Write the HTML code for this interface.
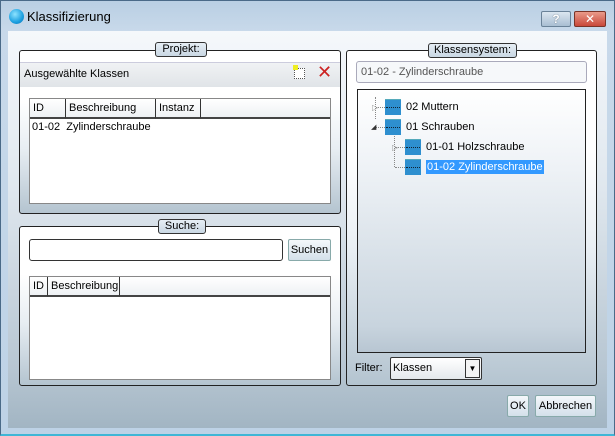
<!DOCTYPE html>
<html><head><meta charset="utf-8"><style>
*{box-sizing:border-box;margin:0;padding:0}
body{width:615px;height:436px;overflow:hidden;font-family:"Liberation Sans","DejaVu Sans",sans-serif;font-size:11px;color:#000;background:#c5d7e8;position:relative}
.abs{position:absolute}
.frame{left:0;top:0;width:615px;height:436px;background:linear-gradient(#b9cfe3,#c8d9ea 30px,#bdd2e6);border:1px solid #4a6a88;border-bottom:2px solid #3fb6d6}
.client{left:8px;top:31px;width:599px;height:397px;background:linear-gradient(#f5f8fb,#dfe7ee 40%,#b7c6d2 85%,#a2b5c3);}
.panel{border:1px solid #222;border-radius:3px;background:linear-gradient(#fff 30%,#e8eef3 60%,#b4c4d0)}
.lbl{border:1px solid #333;border-radius:3px;background:linear-gradient(#e6eef5,#c9d7e3);text-align:center;font-size:11px;line-height:13px;height:15px}
.tbl{border:1px solid #888;background:#fff}
.th{position:absolute;top:0;height:20px;border-right:1px solid #333;border-bottom:2px solid #444;background:linear-gradient(#fff,#eef1f4);padding:3px 0 0 3px;white-space:nowrap}
.btn{border:1px solid #8aa;border-radius:2px;background:linear-gradient(#f4f8fb,#d4e0ea);text-align:center}
.ico{width:16px;height:16px;background:#2e8fcf;border-top:1px solid #5ab;}
.ico:after{content:"";position:absolute;left:1px;top:7px;width:14px;height:2px;border-top:1px dotted #123}
</style></head><body>
<div class="abs frame"></div>
<div class="abs" style="left:9px;top:9px;width:15px;height:15px;border-radius:50%;background:radial-gradient(circle at 40% 35%,#8de3ff,#1b9fe0 60%,#0a6eb0)"></div>
<div class="abs" style="left:27px;top:9px;font-size:13px">Klassifizierung</div>
<div class="abs btn" style="left:541px;top:11px;width:30px;height:16px;background:linear-gradient(#dbe6f0,#a9bed2);border-color:#6a8298;font-size:12px;line-height:14px;color:#fff;font-weight:bold;text-shadow:0 0 1px #345">?</div>
<div class="abs" style="left:574px;top:11px;width:32px;height:16px;border:1px solid #7a3428;border-radius:2px;background:linear-gradient(#e99b8a,#c9483a);color:#fff;font-weight:bold;text-align:center;font-size:12px;line-height:14px">✕</div>
<div class="abs client"></div>

<div class="abs panel" style="left:19px;top:50px;width:322px;height:164px"></div>
<div class="abs lbl" style="left:155px;top:42px;width:52px">Projekt:</div>
<div class="abs" style="left:20px;top:62px;width:320px;height:25px;background:linear-gradient(#f0f2f4,#e0e4e8);border-top:1px solid #ccd"></div>
<div class="abs" style="left:24px;top:68px">Ausgewählte Klassen</div>
<div class="abs" style="left:294px;top:68px;width:11px;height:11px;border:1px dotted #555;background:#fff"></div>
<div class="abs" style="left:293px;top:65px;width:5px;height:5px;background:#ee2"></div>
<div class="abs" style="left:317px;top:62px;font-size:18px;color:#c22;font-weight:bold">✕</div>
<div class="abs tbl" style="left:29px;top:98px;width:302px;height:106px">
<div class="th" style="left:0;width:36px">ID</div>
<div class="th" style="left:36px;width:90px">Beschreibung</div>
<div class="th" style="left:126px;width:45px">Instanz</div>
<div class="th" style="left:171px;width:129px;border-right:0"></div>
<div class="abs" style="left:2px;top:22px">01-02&nbsp; Zylinderschraube</div>
</div>

<div class="abs panel" style="left:19px;top:226px;width:322px;height:160px"></div>
<div class="abs lbl" style="left:158px;top:219px;width:48px">Suche:</div>
<div class="abs" style="left:29px;top:239px;width:254px;height:22px;border:1px solid #333;border-radius:3px;background:#fff"></div>
<div class="abs btn" style="left:288px;top:239px;width:43px;height:22px;line-height:20px">Suchen</div>
<div class="abs tbl" style="left:29px;top:276px;width:302px;height:104px">
<div class="th" style="left:0;width:18px">ID</div>
<div class="th" style="left:18px;width:72px">Beschreibung</div>
<div class="th" style="left:90px;width:210px;border-right:0"></div>
</div>

<div class="abs panel" style="left:346px;top:50px;width:251px;height:336px"></div>
<div class="abs lbl" style="left:428px;top:43px;width:89px">Klassensystem:</div>
<div class="abs" style="left:356px;top:61px;width:231px;height:22px;border:1px solid #aab;border-radius:3px;background:#f6f8fa;color:#555;padding:4px 0 0 4px">01-02 - Zylinderschraube</div>
<div class="abs" style="left:357px;top:89px;width:229px;height:264px;border:1px solid #222;background:linear-gradient(#fff,#eef2f6 30%,#c8d4de 90%,#b8c6d2)"></div>
<div class="abs" style="left:375px;top:97px;height:22px;border-left:1px dotted #888"></div>
<div class="abs" style="left:376px;top:107px;width:9px;border-top:1px dotted #888"></div>
<div class="abs" style="left:372px;top:103px;font-size:8px;color:#999">▷</div>
<div class="abs ico" style="left:385px;top:99px"></div>
<div class="abs" style="left:406px;top:101px">02 Muttern</div>
<div class="abs" style="left:376px;top:127px;width:9px;border-top:1px dotted #888"></div>
<div class="abs" style="left:371px;top:123px;font-size:7px;color:#333">◢</div>
<div class="abs ico" style="left:385px;top:119px"></div>
<div class="abs" style="left:406px;top:121px">01 Schrauben</div>
<div class="abs" style="left:394px;top:136px;height:31px;border-left:1px dotted #888"></div>
<div class="abs" style="left:395px;top:147px;width:10px;border-top:1px dotted #888"></div>
<div class="abs" style="left:392px;top:143px;font-size:8px;color:#999">▷</div>
<div class="abs ico" style="left:405px;top:139px"></div>
<div class="abs" style="left:426px;top:141px">01-01 Holzschraube</div>
<div class="abs" style="left:395px;top:167px;width:10px;border-top:1px dotted #888"></div>
<div class="abs ico" style="left:405px;top:159px"></div>
<div class="abs" style="left:426px;top:160px;background:#3399ff;color:#fff;padding:0 1px;height:14px;line-height:14px">01-02 Zylinderschraube</div>
<div class="abs" style="left:355px;top:362px">Filter:</div>
<div class="abs" style="left:390px;top:357px;width:92px;height:23px;border:1px solid #333;border-radius:2px;background:linear-gradient(#fff,#e4e8ec);padding:4px 0 0 2px">Klassen</div>
<div class="abs" style="left:465px;top:359px;width:15px;height:19px;border:1px solid #333;background:#f3f3f3;font-size:8px;text-align:center;line-height:17px">▼</div>

<div class="abs btn" style="left:507px;top:395px;width:22px;height:22px;line-height:20px">OK</div>
<div class="abs btn" style="left:535px;top:395px;width:61px;height:22px;line-height:20px">Abbrechen</div>
</body></html>
